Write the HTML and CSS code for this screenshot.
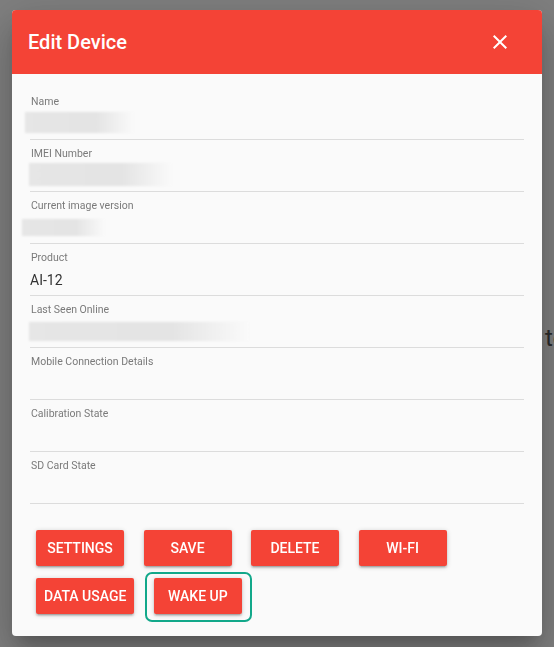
FILE: index.html
```html
<!DOCTYPE html>
<html lang="en">
<head>
    <meta charset="UTF-8">
    <meta name="viewport" content="width=device-width, initial-scale=1.0">
    <title>Edit Device</title>
    <link rel="stylesheet" href="styles.css">
</head>
<body>
    <div class="page">
        <div class="page-title">test devices</div>
    </div>

    <div class="backdrop">
        <div class="dialog">
            <div class="dialog-header">
                <h1>Edit Device</h1>
                <button class="close" aria-label="Close">
                    <svg width="24" height="24" viewBox="0 0 24 24">
                        <path d="M19 6.41L17.59 5 12 10.59 6.41 5 5 6.41 10.59 12 5 17.59 6.41 19 12 13.41 17.59 19 19 17.59 13.41 12z" fill="#fff"/>
                    </svg>
                </button>
            </div>

            <div class="dialog-body">
                <div class="field">
                    <label>Name</label>
                    <div class="value"><span class="redact redact-name"></span></div>
                </div>
                <div class="field">
                    <label>IMEI Number</label>
                    <div class="value"><span class="redact redact-imei"></span></div>
                </div>
                <div class="field">
                    <label>Current image version</label>
                    <div class="value"><span class="redact redact-image"></span></div>
                </div>
                <div class="field">
                    <label>Product</label>
                    <div class="value">AI-12</div>
                </div>
                <div class="field">
                    <label>Last Seen Online</label>
                    <div class="value"><span class="redact redact-seen"></span></div>
                </div>
                <div class="field">
                    <label>Mobile Connection Details</label>
                    <div class="value"></div>
                </div>
                <div class="field">
                    <label>Calibration State</label>
                    <div class="value"></div>
                </div>
                <div class="field">
                    <label>SD Card State</label>
                    <div class="value"></div>
                </div>

                <div class="actions">
                    <button class="btn">Settings</button>
                    <button class="btn">Save</button>
                    <button class="btn">Delete</button>
                    <button class="btn">Wi-Fi</button>
                    <button class="btn">Data Usage</button>
                    <span class="highlight"><button class="btn">Wake Up</button></span>
                </div>
            </div>
        </div>
    </div>
</body>
</html>
```

FILE: styles.css
```css
body {
    margin: 0;
    font-family: Roboto, "Liberation Sans", Arial, sans-serif;
    background: #fff;
}
.page {
    padding: 324px 0 0 545px;
    overflow: hidden;
}
.page-title {
    white-space: nowrap;
    font-size: 24px;
    color: #555;
    line-height: 28px;
}
.backdrop {
    position: fixed;
    inset: 0;
    background: rgba(0, 0, 0, 0.5);
    padding: 10px 12px;
}
.dialog {
    width: 530px;
    height: 626px;
    background: #fafafa;
    border-radius: 4px;
    overflow: hidden;
    box-shadow: 0 11px 15px -7px rgba(0,0,0,.2), 0 24px 38px 3px rgba(0,0,0,.14), 0 9px 46px 8px rgba(0,0,0,.12);
}
.dialog-header {
    height: 64px;
    background: #f44336;
    display: flex;
    align-items: center;
    justify-content: space-between;
    padding: 0 30px 0 16px;
}
.dialog-header h1 {
    margin: 0;
    font-size: 20px;
    font-weight: 500;
    color: #fff;
}
.close {
    border: none;
    background: none;
    padding: 0;
    width: 24px;
    height: 24px;
    cursor: pointer;
}
.close svg {
    display: block;
}
.dialog-body {
    padding: 14px 18px 0 18px;
}
.field {
    height: 52px;
    box-sizing: border-box;
    border-bottom: 1px solid #dcdcdc;
    padding-top: 7px;
}
.field label {
    display: block;
    font-size: 10.5px;
    line-height: 14px;
    color: #7a7a7a;
    padding-left: 1px;
}
.value {
    font-size: 14px;
    line-height: 30px;
    height: 30px;
    color: #333;
}
.redact {
    display: block;
    background: linear-gradient(to right, #e6e6e6 0%, #e4e4e4 65%, #fafafa 100%);
    filter: blur(1px);
}
.redact-name {
    margin: 3px 0 0 -5px;
    width: 109px;
    height: 21px;
}
.redact-imei {
    margin: 2px 0 0 -1px;
    width: 143px;
    height: 23px;
}
.redact-image {
    margin: 6px 0 0 -8px;
    width: 83px;
    height: 17px;
}
.redact-seen {
    margin: 5px 0 0 -1px;
    width: 220px;
    height: 19px;
}
.actions {
    display: flex;
    flex-wrap: wrap;
    gap: 12px 19.5px;
    padding: 26px 0 0 6px;
}
.btn {
    min-width: 88px;
    height: 36px;
    padding: 0 8px;
    border: none;
    border-radius: 2px;
    background: #f44336;
    color: #fff;
    font-family: Roboto, "Liberation Sans", Arial, sans-serif;
    font-size: 14px;
    font-weight: 500;
    text-transform: uppercase;
    cursor: pointer;
    box-shadow: 0 2px 2px 0 rgba(0,0,0,.14), 0 3px 1px -2px rgba(0,0,0,.12), 0 1px 5px 0 rgba(0,0,0,.2);
}
.highlight {
    position: relative;
    display: inline-flex;
}
.highlight::after {
    content: "";
    position: absolute;
    inset: -6px -10px -8px -9px;
    border: 2px solid #12a88a;
    border-radius: 7px;
    pointer-events: none;
}
```
